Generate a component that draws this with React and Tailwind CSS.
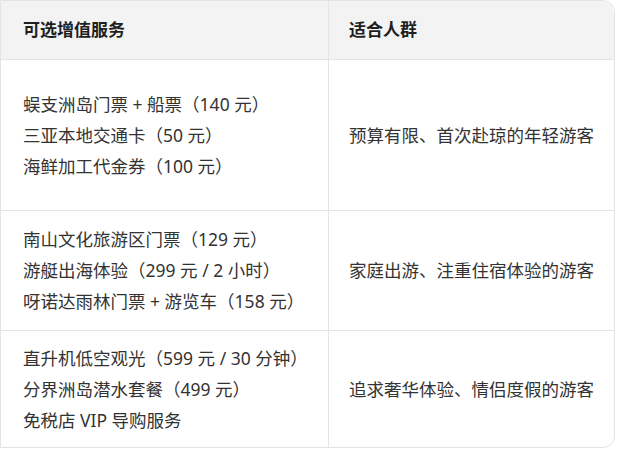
import React from 'react';

const rows = [
  {
    services: ['蜈支洲岛门票 + 船票（140 元）', '三亚本地交通卡（50 元）', '海鲜加工代金券（100 元）'],
    audience: '预算有限、首次赴琼的年轻游客',
    height: 'h-[151px]',
  },
  {
    services: ['南山文化旅游区门票（129 元）', '游艇出海体验（299 元 / 2 小时）', '呀诺达雨林门票 + 游览车（158 元）'],
    audience: '家庭出游、注重住宿体验的游客',
    height: 'h-[120px]',
  },
  {
    services: ['直升机低空观光（599 元 / 30 分钟）', '分界洲岛潜水套餐（499 元）', '免税店 VIP 导购服务'],
    audience: '追求奢华体验、情侣度假的游客',
    height: 'h-[116px]',
  },
];

const App = () => {
  return (
    <div
      className="w-[617px] h-[452px] bg-white"
      style={{ fontFamily: '"Noto Sans", "Noto Sans CJK SC", sans-serif' }}
    >
      <div className="w-[615px] border border-[#e4e4e4] rounded-r-[12px] overflow-hidden">
        {/* Header */}
        <div className="grid grid-cols-[328px_1fr] h-[59px] bg-[#f3f3f3] border-b border-[#e4e4e4]">
          <div className="flex items-center pl-[22px] border-r border-[#e4e4e4] text-[17px] font-bold text-[#1f1f1f]">
            可选增值服务
          </div>
          <div className="flex items-center pl-[20px] text-[17px] font-bold text-[#1f1f1f]">
            适合人群
          </div>
        </div>

        {/* Body rows */}
        {rows.map((row, i) => (
          <div
            key={i}
            className={`grid grid-cols-[328px_1fr] ${row.height} ${i < rows.length - 1 ? 'border-b border-[#e4e4e4]' : ''}`}
          >
            <div className="flex flex-col justify-center pl-[22px] border-r border-[#e4e4e4] text-[17.5px] leading-[31px] text-[#333333]">
              {row.services.map((s) => (
                <div key={s}>{s}</div>
              ))}
            </div>
            <div className="flex items-center pl-[20px] text-[17.5px] text-[#333333]">
              {row.audience}
            </div>
          </div>
        ))}
      </div>
    </div>
  );
};

export default App;
